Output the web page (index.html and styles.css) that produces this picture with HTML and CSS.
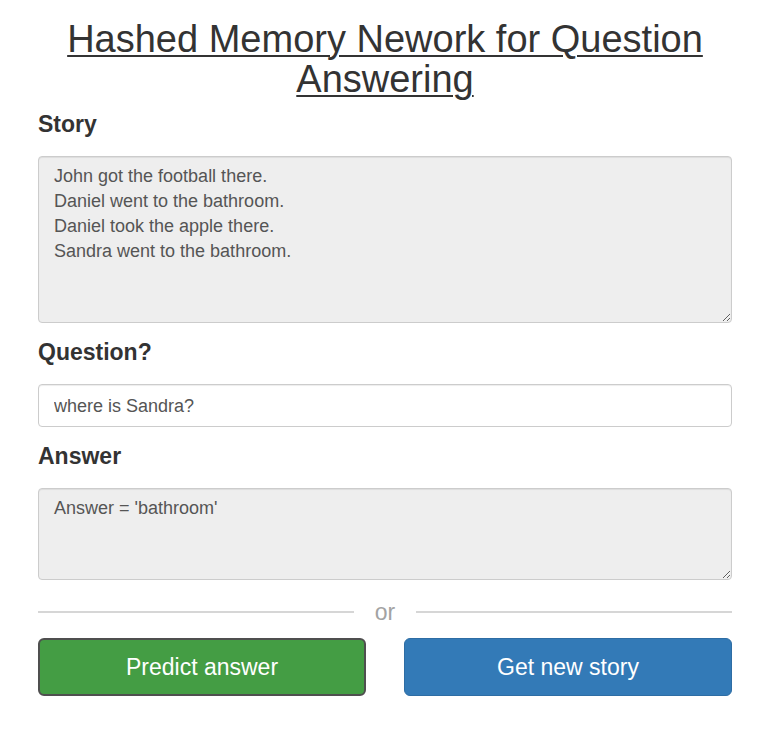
FILE: index.html
```html
<!DOCTYPE html>
<html lang="en">
<head>
<meta charset="utf-8">
<title>Hashed Memory Nework for Question Answering</title>
<link rel="stylesheet" href="styles.css">
</head>
<body>
<div class="page">
  <h1 class="title">Hashed Memory Nework for Question Answering</h1>
  <h3 class="label label-story">Story</h3>
  <textarea class="field story" readonly>John got the football there.
Daniel went to the bathroom.
Daniel took the apple there.
Sandra went to the bathroom.</textarea>
  <h3 class="label">Question?</h3>
  <input class="field question" type="text" value="where is Sandra?">
  <h3 class="label">Answer</h3>
  <textarea class="field answer" readonly>Answer = 'bathroom'</textarea>
  <div class="divider"><span class="rule"></span><span class="or">or</span><span class="rule"></span></div>
  <div class="buttons">
    <button class="btn btn-success" type="button">Predict answer</button>
    <button class="btn btn-primary" type="button">Get new story</button>
  </div>
</div>
</body>
</html>
```

FILE: styles.css
```css
html, body {
  margin: 0;
  padding: 0;
  background: #fff;
}

body {
  font-family: "Liberation Sans", Arial, sans-serif;
  color: #333;
}

.page {
  padding: 19px 35px 0 38px;
  display: flex;
  flex-direction: column;
}

.title {
  margin: 0;
  font-size: 38px;
  line-height: 40px;
  font-weight: normal;
  text-align: center;
  text-decoration: underline;
  text-decoration-thickness: 2px;
  text-underline-offset: 3px;
  color: #333;
}

.label {
  margin: 16px 0 19px;
  font-size: 23px;
  line-height: 26px;
  font-weight: bold;
  color: #333;
}

.label-story {
  margin-top: 12px;
}

.field {
  display: block;
  box-sizing: border-box;
  width: 100%;
  margin: 0;
  font-family: "Liberation Sans", Arial, sans-serif;
  font-size: 18px;
  line-height: 25px;
  color: #555;
  border: 1px solid #ccc;
  border-radius: 4px;
  box-shadow: inset 0 1px 1px rgba(0, 0, 0, 0.075);
  outline: none;
}

textarea.field {
  background: #eee;
  padding: 7px 15px 6px;
  resize: vertical;
}

.story {
  height: 167px;
}

.question {
  height: 43px;
  padding: 9px 15px 7px;
  background: #fff;
}

.answer {
  height: 92px;
}

.divider {
  display: flex;
  align-items: center;
  gap: 21px;
  margin-top: 19px;
  height: 26px;
}

.rule {
  flex: 1;
  height: 2px;
  background: #d6d6d6;
}

.or {
  font-size: 23px;
  line-height: 26px;
  color: #a3a3a3;
}

.buttons {
  display: grid;
  grid-template-columns: 1fr 1fr;
  column-gap: 38px;
  margin-top: 13px;
}

.btn {
  box-sizing: border-box;
  height: 58px;
  font-family: "Liberation Sans", Arial, sans-serif;
  font-size: 23px;
  color: #fff;
  border-radius: 6px;
  border: 1px solid transparent;
  cursor: pointer;
}

.btn-success {
  background: #449d44;
  border: 2px solid #4f4f4f;
}

.btn-primary {
  background: #337ab7;
  border-color: #2e6da4;
}
```
